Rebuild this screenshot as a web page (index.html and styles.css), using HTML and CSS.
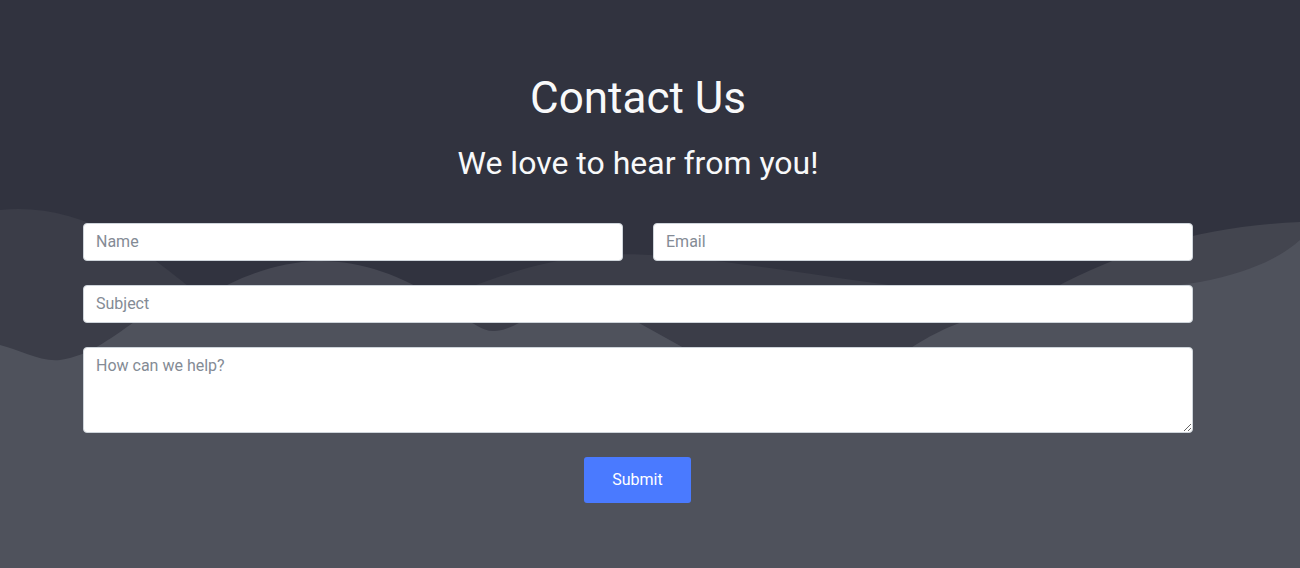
FILE: index.html
```html
<!DOCTYPE html>
<html lang="en">
<head>
<meta charset="utf-8">
<title>Contact Us</title>
<link rel="stylesheet" href="styles.css">
</head>
<body>
<section class="contact">
  <svg class="contact-bg" viewBox="0 0 1300 568" width="1300" height="568" preserveAspectRatio="none" aria-hidden="true">
    <rect x="0" y="0" width="1300" height="568" fill="#31333f"/>
    <path fill="#3b3d48" d="M0,210 C40,206 80,215 120,238 C150,255 175,275 205,300 L430,300 C470,290 520,262 600,255 C680,250 780,272 1000,300 L1300,300 L1300,568 L0,568 Z"/>
    <path fill="#454752" d="M200,300 C240,275 280,262 317,261 C360,260 400,275 440,300 Z"/>
    <path fill="#43454f" d="M1030,300 C1070,280 1110,258 1160,245 C1200,232 1250,224 1300,222 L1300,568 L1030,568 Z"/>
    <path fill="#4f525c" d="M0,345 C20,350 40,362 60,360 C90,356 115,335 140,318 L460,318 C475,322 482,332 495,331 C510,330 518,322 530,318 L630,318 C660,335 690,350 720,370 C770,400 860,390 900,355 C930,335 950,325 975,318 C1050,300 1150,290 1200,282 C1250,272 1280,258 1300,240 L1300,568 L0,568 Z"/>
  </svg>
  <div class="contact-inner">
    <h1 class="contact-title">Contact Us</h1>
    <h2 class="contact-subtitle">We love to hear from you!</h2>
    <form class="contact-form">
      <div class="form-row">
        <input class="form-field" type="text" placeholder="Name">
        <input class="form-field" type="email" placeholder="Email">
      </div>
      <input class="form-field" type="text" placeholder="Subject">
      <textarea class="form-field form-area" rows="3" placeholder="How can we help?"></textarea>
      <div class="form-actions">
        <button class="btn-submit" type="button">Submit</button>
      </div>
    </form>
  </div>
</section>
</body>
</html>
```

FILE: styles.css
```css
* {
  box-sizing: border-box;
}

html, body {
  margin: 0;
  padding: 0;
}

body {
  font-family: Roboto, "Liberation Sans", Arial, sans-serif;
  background: #31333f;
}

.contact {
  position: relative;
  width: 1300px;
  height: 568px;
  overflow: hidden;
  background: #31333f;
}

.contact-bg {
  position: absolute;
  left: 0;
  top: 0;
  width: 1300px;
  height: 568px;
  display: block;
}

.contact-inner {
  position: relative;
  width: 1276px;
  padding-top: 72px;
  text-align: center;
}

.contact-title {
  margin: 0 0 19px;
  font-size: 44px;
  line-height: 1.2;
  font-weight: 400;
  color: #f8f9fa;
}

.contact-subtitle {
  margin: 0 0 41px;
  font-size: 32px;
  line-height: 1.2;
  font-weight: 400;
  color: #f8f9fa;
}

.contact-form {
  width: 1110px;
  margin: 0 auto;
  display: flex;
  flex-direction: column;
  gap: 24px;
}

.form-row {
  display: grid;
  grid-template-columns: 1fr 1fr;
  gap: 30px;
}

.form-field {
  display: block;
  width: 100%;
  height: 38px;
  padding: 5px 12px 7px;
  font-family: Roboto, "Liberation Sans", Arial, sans-serif;
  font-size: 16px;
  line-height: 24px;
  color: #495057;
  background: #ffffff;
  border: 1px solid #ced4da;
  border-radius: 4px;
  outline: none;
  margin: 0;
}

.form-field::placeholder {
  color: #848b95;
  opacity: 1;
}

.form-area {
  height: 86px;
  padding: 6px 12px;
  resize: vertical;
}

.form-actions {
  display: flex;
  justify-content: center;
  padding-right: 1px;
}

.btn-submit {
  width: 107px;
  height: 46px;
  font-family: Roboto, "Liberation Sans", Arial, sans-serif;
  font-size: 16px;
  line-height: 24px;
  padding: 11px 0;
  color: #ffffff;
  background: #4a7aff;
  border: none;
  border-radius: 3px;
  cursor: pointer;
}
```
